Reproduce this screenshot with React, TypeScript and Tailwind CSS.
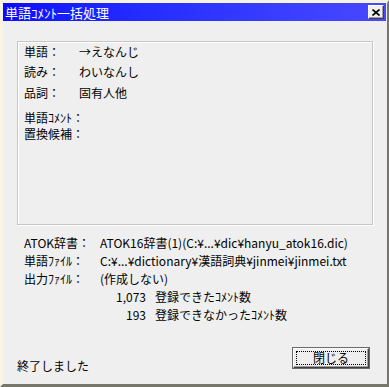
import React from 'react'

const font = { fontFamily: '"MS UI Gothic", "Noto Sans CJK JP", "Noto Sans", sans-serif' }

function CloseBox() {
  return (
    <div className="mr-[2px] flex h-[14px] w-[16px] items-center justify-center border border-t-white border-l-white border-r-[#404040] border-b-[#404040] bg-[#efefef] shadow-[inset_-1px_-1px_0_#a0a0a0]">
      <svg width="8" height="7" viewBox="0 0 8 7">
        <path d="M0.5 0.5 L7.5 6.5 M7.5 0.5 L0.5 6.5" stroke="#000" strokeWidth="1.6" />
      </svg>
    </div>
  )
}

export default function App() {
  const wordRows = [
    ['単語：', '→えなんじ'],
    ['読み：', 'わいなんし'],
    ['品詞：', '固有人他']
  ]
  const infoRows = [
    ['ATOK辞書：', 'ATOK16辞書(1)(C:¥...¥dic¥hanyu_atok16.dic)'],
    ['単語ﾌｧｲﾙ：', 'C:¥...¥dictionary¥漢語詞典¥jinmei¥jinmei.txt'],
    ['出力ﾌｧｲﾙ：', '(作成しない)']
  ]
  const counts = [
    ['1,073', '登録できたｺﾒﾝﾄ数'],
    ['193', '登録できなかったｺﾒﾝﾄ数']
  ]

  return (
    <div
      className="flex h-[387px] w-[389px] flex-col border-t-[3px] border-l-[3px] border-r-2 border-b-[3px] border-t-[#f8f4e2] border-l-[#f8f4e2] border-r-[#77776c] border-b-[#77776c] bg-[#efefef] text-[12px] leading-none text-black"
      style={font}
    >
      <div className="mr-[1px] flex h-[18px] items-center justify-between bg-gradient-to-r from-[#0a0aff] to-[#4848ff] pl-[2px]">
        <span className="text-[13px] text-white">単語ｺﾒﾝﾄ一括処理</span>
        <CloseBox />
      </div>

      <div className="ml-[14px] mt-[20px] flex h-[184px] w-[356px] flex-col border border-[#c6c6c6] pl-[6px] shadow-[inset_1px_1px_0_#fff,1px_1px_0_#fff]">
        {wordRows.map(([label, value], i) => (
          <div key={label} className={i === 2 ? 'flex h-[22px] items-center' : 'flex h-5 items-center'}>
            <span className="w-[55px]">{label}</span>
            <span>{value}</span>
          </div>
        ))}
        <div className="mt-[6px] flex h-[16px] items-center">単語ｺﾒﾝﾄ：</div>
        <div className="flex h-[16px] items-center">置換候補：</div>
      </div>

      <div className="ml-[21px] mt-[9px] flex flex-col">
        {infoRows.map(([label, value]) => (
          <div key={label} className="flex h-[18px] items-center">
            <span className="w-[76px]">{label}</span>
            <span>{value}</span>
          </div>
        ))}
        {counts.map(([n, text]) => (
          <div key={n} className="flex h-[18px] items-center">
            <span className="w-[122px] text-right">{n}</span>
            <span className="ml-[9px]">{text}</span>
          </div>
        ))}
      </div>

      <div className="mt-auto mb-[16px] flex items-end justify-between pl-[14px] pr-[18px]">
        <span className="mb-[-4px]">終了しました</span>
        <button className="flex h-[20px] w-[76px] items-center justify-center border border-t-white border-l-white border-r-[#404040] border-b-[#404040] bg-[#efefef] p-[2px] shadow-[inset_-1px_-1px_0_#a0a0a0,0_0_0_1px_#6a6a6a]">
          <span className="flex h-full w-full items-center justify-center border border-dotted border-black">閉じる</span>
        </button>
      </div>
    </div>
  )
}
